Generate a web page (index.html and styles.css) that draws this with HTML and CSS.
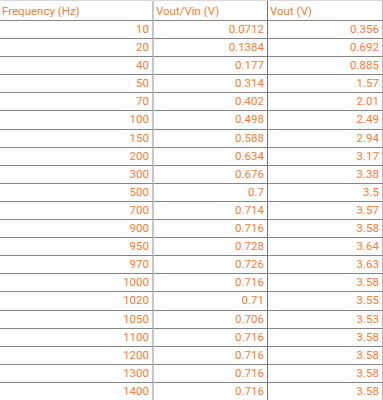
FILE: index.html
```html
<!DOCTYPE html>
<html>
<head>
<meta charset="utf-8">
<link rel="stylesheet" href="styles.css">
</head>
<body>
<div class="sheet">
  <div class="cell head">Frequency (Hz)</div><div class="cell head">Vout/Vin (V)</div><div class="cell head">Vout (V)</div>
  <div class="cell">10</div><div class="cell">0.0712</div><div class="cell">0.356</div>
  <div class="cell">20</div><div class="cell">0.1384</div><div class="cell">0.692</div>
  <div class="cell">40</div><div class="cell">0.177</div><div class="cell">0.885</div>
  <div class="cell">50</div><div class="cell">0.314</div><div class="cell">1.57</div>
  <div class="cell">70</div><div class="cell">0.402</div><div class="cell">2.01</div>
  <div class="cell">100</div><div class="cell">0.498</div><div class="cell">2.49</div>
  <div class="cell">150</div><div class="cell">0.588</div><div class="cell">2.94</div>
  <div class="cell">200</div><div class="cell">0.634</div><div class="cell">3.17</div>
  <div class="cell">300</div><div class="cell">0.676</div><div class="cell">3.38</div>
  <div class="cell">500</div><div class="cell">0.7</div><div class="cell">3.5</div>
  <div class="cell">700</div><div class="cell">0.714</div><div class="cell">3.57</div>
  <div class="cell">900</div><div class="cell">0.716</div><div class="cell">3.58</div>
  <div class="cell">950</div><div class="cell">0.728</div><div class="cell">3.64</div>
  <div class="cell">970</div><div class="cell">0.726</div><div class="cell">3.63</div>
  <div class="cell">1000</div><div class="cell">0.716</div><div class="cell">3.58</div>
  <div class="cell">1020</div><div class="cell">0.71</div><div class="cell">3.55</div>
  <div class="cell">1050</div><div class="cell">0.706</div><div class="cell">3.53</div>
  <div class="cell">1100</div><div class="cell">0.716</div><div class="cell">3.58</div>
  <div class="cell">1200</div><div class="cell">0.716</div><div class="cell">3.58</div>
  <div class="cell">1300</div><div class="cell">0.716</div><div class="cell">3.58</div>
  <div class="cell">1400</div><div class="cell">0.716</div><div class="cell">3.58</div>
</div>
</body>
</html>
```
FILE: styles.css
```css
html, body {
  margin: 0;
  padding: 0;
  background: #ffffff;
}
.sheet {
  display: grid;
  grid-template-columns: 154px 114px 115px;
  grid-template-rows: 20px;
  grid-auto-rows: 18.1px;
  width: 383px;
  font-family: Roboto, "Liberation Sans", sans-serif;
  font-size: 11.5px;
  color: #f37d33;
  border-top: 1px solid #d8d8d8;
}
.cell {
  box-sizing: border-box;
  padding: 0 3px 0 3px;
  border-bottom: 1px solid #858585;
  border-right: 1px solid #b4b4b4;
  line-height: 17px;
  white-space: nowrap;
  overflow: hidden;
  text-align: right;
}
.cell:nth-child(3n+1) {
  border-right: 2px solid #c6c6c6;
}
.cell:nth-child(3n+2) {
  border-right: 1px solid #707070;
}
.head {
  text-align: left;
  padding-left: 2px;
  line-height: 20px;
}
```
